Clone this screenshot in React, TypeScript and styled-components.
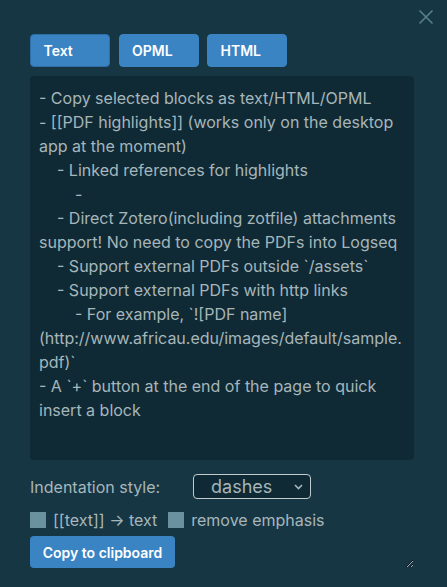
import React, { useState } from "react";
import styled, { createGlobalStyle } from "styled-components";

const Global = createGlobalStyle`
  html, body {
    margin: 0;
    padding: 0;
    background: #173644;
    font-family: Inter, "Noto Sans", sans-serif;
  }
  * { box-sizing: border-box; }
`;

const Page = styled.div`
  position: relative;
  width: 447px;
  height: 587px;
  padding: 34px 30px 0 30px;
  background: #173644;
`;

const Close = styled.button`
  position: absolute;
  top: 9px;
  right: 13px;
  width: 16px;
  height: 16px;
  padding: 0;
  border: none;
  background: transparent;
  cursor: pointer;
  display: flex;
`;

const Panel = styled.div`
  width: 384px;
  height: 534px;
  resize: both;
  overflow: hidden;
  display: flex;
  flex-direction: column;
`;

const Tabs = styled.div`
  display: flex;
  gap: 8.5px;
`;

const TabButton = styled.button<{ $active?: boolean }>`
  width: 80px;
  height: 33px;
  padding: 0 0 0 12.5px;
  text-align: left;
  border-radius: 4px;
  border: 1px solid ${(p) => (p.$active ? "#2d6ea6" : "#3a84c4")};
  background: #3a84c4;
  color: #ffffff;
  font-family: Inter, sans-serif;
  font-size: 14px;
  font-weight: 600;
`;

const Output = styled.textarea`
  margin-top: 9px;
  height: 384px;
  width: 384px;
  flex-shrink: 0;
  resize: none;
  border: none;
  outline: none;
  border-radius: 4px;
  background: #102a35;
  color: #a6b6ba;
  font-family: Inter, sans-serif;
  font-size: 16px;
  line-height: 24px;
  padding: 10px 9px;
  white-space: pre-wrap;
  overflow: hidden;
`;

const OptionRow = styled.div`
  display: flex;
  align-items: center;
  margin-top: 14px;
  height: 25px;
`;

const Label = styled.span`
  color: #a6b6ba;
  font-size: 16px;
  width: 163px;
`;

const SelectWrap = styled.div`
  position: relative;
  width: 118px;
  height: 25px;
`;

const Select = styled.select`
  appearance: none;
  width: 100%;
  height: 100%;
  border: 1px solid #c3cbce;
  border-radius: 4px;
  background: #0f2a35;
  color: #a6b6ba;
  font-family: Inter, sans-serif;
  font-size: 18px;
  padding: 0 0 0 17px;
  outline: none;
`;

const Chevron = styled.svg`
  position: absolute;
  right: 8px;
  top: 10px;
  pointer-events: none;
`;

const CheckRow = styled.div`
  display: flex;
  align-items: center;
  margin-top: 12px;
  height: 18px;
`;

const Check = styled.label`
  display: flex;
  align-items: center;
  gap: 7px;
  margin-right: 11px;
  color: #a6b6ba;
  font-size: 16px;
`;

const Box = styled.input`
  appearance: none;
  margin: 0;
  width: 16px;
  height: 16px;
  background: #6a929e;
  border: none;
`;

const CopyButton = styled.button`
  margin-top: 7px;
  align-self: flex-start;
  width: 145px;
  height: 34px;
  border: none;
  border-radius: 4px;
  background: #3a84c4;
  color: #ffffff;
  font-family: Inter, sans-serif;
  font-size: 14px;
  font-weight: 600;
`;

const content = `- Copy selected blocks as text/HTML/OPML
- [[PDF highlights]] (works only on the desktop app at the moment)
    - Linked references for highlights
        - 
    - Direct Zotero(including zotfile) attachments support! No need to copy the PDFs into Logseq
    - Support external PDFs outside \`/assets\`
    - Support external PDFs with http links
        - For example, \`![PDF name](http://www.africau.edu/images/default/sample.pdf)\`
- A \`+\` button at the end of the page to quick insert a block`;

export default function App() {
  const [tab, setTab] = useState("Text");
  return (
    <>
      <Global />
      <Page>
        <Close aria-label="close">
          <svg width="16" height="16" viewBox="0 0 16 16">
            <path d="M1.5 1.5 L14.5 14.5 M14.5 1.5 L1.5 14.5" stroke="#55808b" strokeWidth="1.6" fill="none" />
          </svg>
        </Close>
        <Panel>
          <Tabs>
            {["Text", "OPML", "HTML"].map((t) => (
              <TabButton key={t} $active={tab === t} onClick={() => setTab(t)}>
                {t}
              </TabButton>
            ))}
          </Tabs>
          <Output readOnly value={content} />
          <OptionRow>
            <Label>Indentation style:</Label>
            <SelectWrap>
              <Select defaultValue="dashes">
                <option value="dashes">dashes</option>
                <option value="spaces">spaces</option>
                <option value="no-indent">no-indent</option>
              </Select>
              <Chevron width="9" height="6" viewBox="0 0 9 6">
                <path d="M1 1 L4.5 4.5 L8 1" stroke="#a6b6ba" strokeWidth="1.6" fill="none" />
              </Chevron>
            </SelectWrap>
          </OptionRow>
          <CheckRow>
            <Check>
              <Box type="checkbox" />
              [[text]] → text
            </Check>
            <Check>
              <Box type="checkbox" />
              remove emphasis
            </Check>
          </CheckRow>
          <CopyButton>Copy to clipboard</CopyButton>
        </Panel>
      </Page>
    </>
  );
}
